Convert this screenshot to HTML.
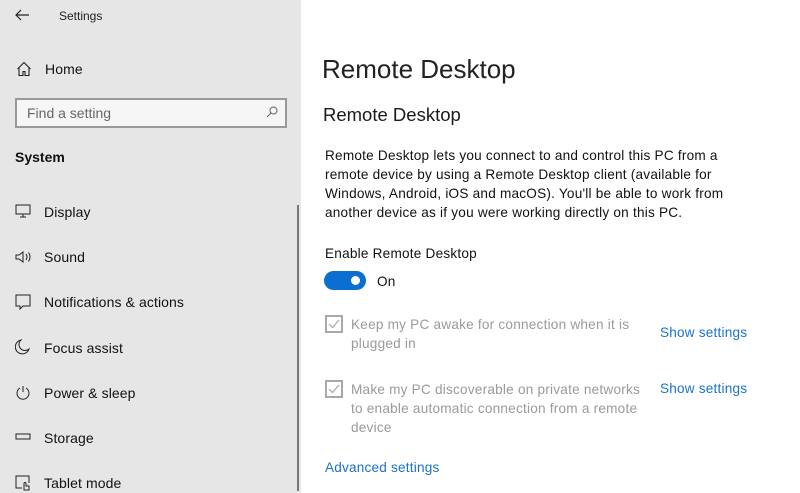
<!DOCTYPE html>
<html><head><style>
*{margin:0;padding:0;box-sizing:border-box}
body{width:800px;height:493px;overflow:hidden;background:#fff;font-family:"Liberation Sans",sans-serif;color:#000;position:relative}
.side{position:absolute;left:0;top:0;width:301px;height:493px;background:#e6e6e6}
.a{position:absolute;white-space:nowrap}
.nav{font-size:14px;color:#111;letter-spacing:0.1px}
.ic{position:absolute}
.p{font-size:13.6px;line-height:19px;color:#111;letter-spacing:0.22px}
.g{color:#9a9a9a}
.lnk{color:#1a73c8;font-size:13.6px;letter-spacing:0.2px}
.cb{position:absolute;width:18px;height:18px;border:2px solid #a8a8a8}
</style></head><body>
<div class="side">
<svg class="ic" style="left:14px;top:8px" width="16" height="14"><path d="M15 7H2M7 2L2 7l5 5" stroke="#222" stroke-width="1.2" fill="none"/></svg>
<div class="a" style="left:59px;top:9px;font-size:12px;color:#222">Settings</div>
<svg class="ic" style="left:16px;top:61px" width="16" height="16"><path d="M1.5 8L8 1.5 14.5 8M3 6.5V14.5h4v-4h2v4h4V6.5" stroke="#222" stroke-width="1.1" fill="none"/></svg>
<div class="a nav" style="left:45px;top:61px">Home</div>
<div class="a" style="left:15px;top:98px;width:272px;height:30px;border:2px solid #999;background:#f6f6f6"></div>
<div class="a" style="left:27px;top:105px;font-size:14px;color:#666">Find a setting</div>
<svg class="ic" style="left:266px;top:106px" width="12" height="12"><circle cx="7.5" cy="4.5" r="3.5" stroke="#666" fill="none"/><path d="M5 7L1 11" stroke="#666"/></svg>
<div class="a" style="left:15px;top:149px;font-size:14px;font-weight:bold;color:#111">System</div>
<div style="position:absolute;left:297px;top:205px;width:2px;height:286px;background:#777"></div>
<svg class="ic" style="left:15px;top:204px" width="16" height="14"><rect x="1" y="1" width="14" height="9" stroke="#222" fill="none"/><path d="M8 10v3M5 13h6" stroke="#222"/></svg>
<div class="a nav" style="left:44px;top:204px">Display</div>
<svg class="ic" style="left:15px;top:250px" width="18" height="14"><path d="M1 5h3l4-3v10L4 9H1z" stroke="#222" fill="none"/><path d="M11 4q2 3 0 6M13.5 2.5q3 4.5 0 9" stroke="#222" fill="none"/></svg>
<div class="a nav" style="left:44px;top:249px">Sound</div>
<svg class="ic" style="left:15px;top:294px" width="16" height="16"><path d="M1 1h14v11H8l-3 3v-3H1z" stroke="#222" fill="none"/></svg>
<div class="a nav" style="left:44px;top:294px">Notifications &amp; actions</div>
<svg class="ic" style="left:15px;top:339px" width="16" height="16"><path d="M6 1a7 7 0 1 0 8 9A6 6 0 0 1 6 1z" stroke="#222" fill="none"/></svg>
<div class="a nav" style="left:44px;top:340px">Focus assist</div>
<svg class="ic" style="left:15px;top:385px" width="16" height="16"><path d="M5 3a6 6 0 1 0 6 0M8 1v6" stroke="#222" fill="none"/></svg>
<div class="a nav" style="left:44px;top:385px">Power &amp; sleep</div>
<svg class="ic" style="left:15px;top:433px" width="16" height="8"><rect x="1" y="1" width="14" height="5" stroke="#222" fill="none"/></svg>
<div class="a nav" style="left:44px;top:430px">Storage</div>
<svg class="ic" style="left:15px;top:475px" width="16" height="16"><path d="M7 13H1V1h13v7" stroke="#222" fill="none"/><path d="M9 15V8.5a1 1 0 0 1 2 0V11h3v4z" stroke="#222" fill="none"/></svg>
<div class="a nav" style="left:44px;top:475px">Tablet mode</div>
</div>
<div class="a" style="left:322px;top:54px;font-size:26px;color:#222">Remote Desktop</div>
<div class="a" style="left:323px;top:104px;font-size:18.5px;color:#1a1a1a">Remote Desktop</div>
<div class="a p" style="left:325px;top:146px">Remote Desktop lets you connect to and control this PC from a<br>remote device by using a Remote Desktop client (available for<br>Windows, Android, iOS and macOS). You'll be able to work from<br>another device as if you were working directly on this PC.</div>
<div class="a p" style="left:325px;top:244px">Enable Remote Desktop</div>
<div class="a" style="left:324px;top:271px;width:42px;height:19px;border-radius:10px;background:#0a6fd0"></div>
<div class="a" style="left:351px;top:276px;width:9px;height:9px;border-radius:50%;background:#fff"></div>
<div class="a p" style="left:377px;top:272px">On</div>
<div class="cb" style="left:325px;top:315px"></div>
<svg class="ic" style="left:327px;top:317px" width="14" height="14"><path d="M2 7l3.5 3.5L12 3" stroke="#a8a8a8" stroke-width="1.2" fill="none"/></svg>
<div class="a p g" style="left:351px;top:315px">Keep my PC awake for connection when it is<br>plugged in</div>
<div class="a lnk" style="left:660px;top:325px">Show settings</div>
<div class="cb" style="left:325px;top:380px"></div>
<svg class="ic" style="left:327px;top:382px" width="14" height="14"><path d="M2 7l3.5 3.5L12 3" stroke="#a8a8a8" stroke-width="1.2" fill="none"/></svg>
<div class="a p g" style="left:351px;top:380px">Make my PC discoverable on private networks<br>to enable automatic connection from a remote<br>device</div>
<div class="a lnk" style="left:660px;top:381px">Show settings</div>
<div class="a lnk" style="left:325px;top:460px">Advanced settings</div>
</body></html>
